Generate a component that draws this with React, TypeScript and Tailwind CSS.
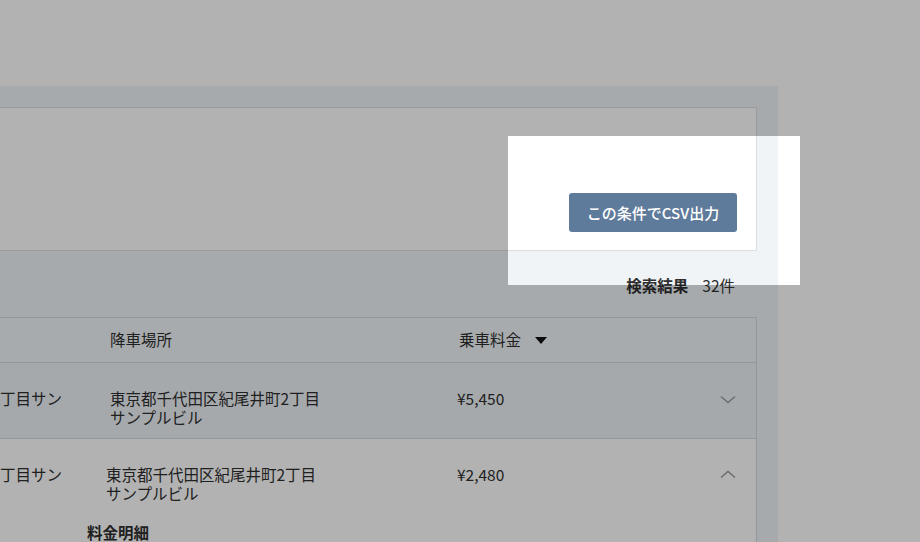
import React from "react";

function ChevronDown() {
  return (
    <svg width="16" height="9" viewBox="0 0 16 9" fill="none">
      <path d="M1 1.5 L8 7.5 L15 1.5" stroke="#9a9a9a" strokeWidth="1.4" />
    </svg>
  );
}

function ChevronUp() {
  return (
    <svg width="16" height="9" viewBox="0 0 16 9" fill="none">
      <path d="M1 7.5 L8 1.5 L15 7.5" stroke="#9a9a9a" strokeWidth="1.4" />
    </svg>
  );
}

function SortDown() {
  return (
    <svg width="12" height="7" viewBox="0 0 12 7">
      <path d="M0 0 H12 L6 7 Z" fill="#111" />
    </svg>
  );
}

export default function App() {
  return (
    <div
      className="relative w-[920px] h-[542px] overflow-hidden bg-white text-[15.5px] text-[#2f2f2f]"
      style={{ fontFamily: '"Noto Sans CJK JP", "Noto Sans", sans-serif' }}
    >
      <div className="h-[86px]" />
      <div className="w-[778px] h-[456px] bg-[#f0f4f7] pt-[21px] pr-[21px]">
        {/* search card */}
        <div className="h-[144px] bg-white border-y border-r border-[#dcdfe2] flex items-end justify-end pr-[19px] pb-[18px]">
          <button className="h-[39px] w-[168px] rounded-[3px] bg-[#5f7b9b] text-white text-[15px] font-medium leading-none">
            この条件でCSV出力
          </button>
        </div>
        {/* result count */}
        <div className="h-[66px] flex justify-end items-start pt-[24px] pr-[22px] leading-[20px]">
          <span className="font-bold">検索結果</span>
          <span className="ml-[14px]">32件</span>
        </div>
        {/* table */}
        <div className="border-t border-r border-[#d6dadd] bg-white">
          <div className="h-[45px] flex items-center bg-[#f1f5f8] border-b border-[#d6dadd]">
            <div className="w-[110px]" />
            <div className="w-[349px]">降車場所</div>
            <div className="flex items-center gap-[14px]">
              <span>乗車料金</span>
              <SortDown />
            </div>
          </div>
          <div className="h-[76px] flex items-start bg-[#edf2f6] border-b border-[#d6dadd] pt-[26px] leading-[19px]">
            <div className="w-[110px]">丁目サン</div>
            <div className="w-[347px]">
              東京都千代田区紀尾井町2丁目
              <br />
              サンプルビル
            </div>
            <div className="flex-1">¥5,450</div>
            <div className="pr-[20px] pt-[6px]">
              <ChevronDown />
            </div>
          </div>
          <div className="h-[120px] bg-white pt-[26px] leading-[19px]">
            <div className="flex items-start">
              <div className="w-[106px]">丁目サン</div>
              <div className="w-[351px]">
                東京都千代田区紀尾井町2丁目
                <br />
                サンプルビル
              </div>
              <div className="flex-1">¥2,480</div>
              <div className="pr-[20px] pt-[5px]">
                <ChevronUp />
              </div>
            </div>
            <div className="pl-[87px] pt-[20px] font-bold">料金明細</div>
          </div>
        </div>
      </div>
      {/* spotlight overlay */}
      <div className="absolute left-[508px] top-[136px] w-[292px] h-[149px] shadow-[0_0_0_2000px_rgba(0,0,0,0.3)] pointer-events-none" />
    </div>
  );
}
